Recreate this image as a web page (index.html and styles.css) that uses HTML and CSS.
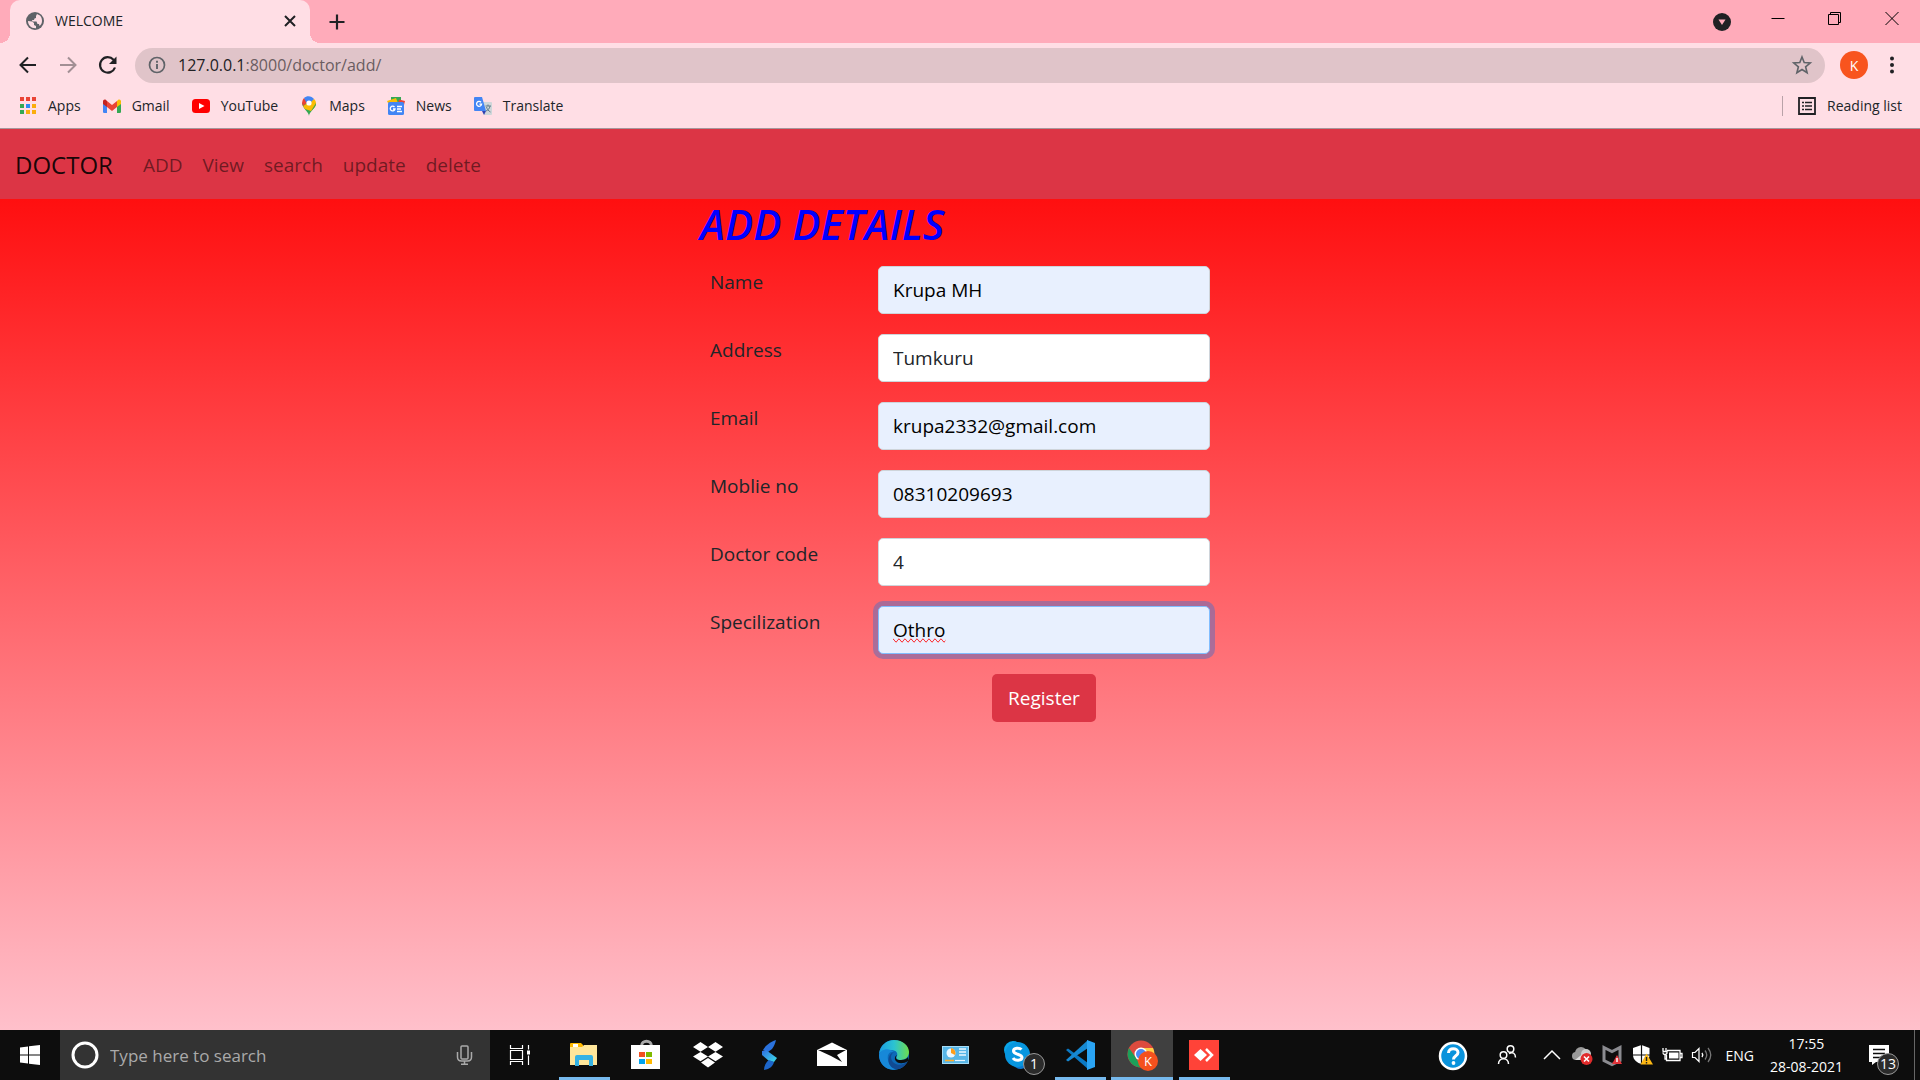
FILE: index.html
```html
<!DOCTYPE html>
<html lang="en">
<head>
<meta charset="utf-8">
<title>WELCOME</title>
<link rel="stylesheet" href="styles.css">
</head>
<body>
<div class="screen">
  <header class="browser">
    <div class="tabstrip">
      <div class="tab">
        <svg class="icon18" viewBox="0 0 18 18"><circle cx="9" cy="9" r="9" fill="#5f6368"/><path d="M2 9l4 .5 2 1.500v2l2 1v2.200C5 16.500 2 13 2 9zM11 2l3 1.500C15.500 5 16 7 16 9c0 2-1 4-2.500 5l-.5-2h-1.500l-1-2.500H6.500L6 8h2l.5-1.500L10 6V4z" fill="#ffdee5"/></svg>
        <span class="tab-title">WELCOME</span>
        <button class="plain" aria-label="Close tab"><svg class="icon20" viewBox="0 0 20 20"><path d="M5 5l10 10M15 5L5 15" stroke="#202124" stroke-width="2"/></svg></button>
      </div>
      <button class="plain new-tab" aria-label="New tab"><svg class="icon20" viewBox="0 0 20 20"><path d="M10 2.500v15M2.500 10h15" stroke="#202124" stroke-width="2.200"/></svg></button>
      <div class="window-buttons">
        <button class="plain" aria-label="Search tabs"><svg class="icon20" viewBox="0 0 20 20"><circle cx="11" cy="14" r="9" fill="#202124"/><path d="M7.500 11.500h7L11 17z" fill="#ffabba"/></svg></button>
        <button class="plain" aria-label="Minimize"><svg class="icon20" viewBox="0 0 20 20"><path d="M3.500 10.500h13" stroke="#000"/></svg></button>
        <button class="plain" aria-label="Restore"><svg class="icon20" viewBox="0 0 20 20"><path d="M3.500 6.500h10v10h-10zM5.500 6.500v-2h10v10h-2" fill="none" stroke="#000"/></svg></button>
        <button class="plain" aria-label="Close"><svg class="icon20" viewBox="0 0 20 20"><path d="M3.500 4l13 13M16.500 4l-13 13" stroke="#000"/></svg></button>
      </div>
    </div>
    <div class="toolbar">
      <button class="plain" aria-label="Back"><svg class="icon20" viewBox="0 0 20 20"><path d="M18 10H3M10 2.500L2.500 10l7.500 7.500" fill="none" stroke="#202124" stroke-width="2"/></svg></button>
      <button class="plain" aria-label="Forward"><svg class="icon20" viewBox="0 0 20 20"><path d="M2 10h15M10 2.500l7.500 7.500-7.500 7.500" fill="none" stroke="#a28f94" stroke-width="2"/></svg></button>
      <button class="plain" aria-label="Reload"><svg class="icon20" viewBox="0 0 20 20"><path d="M17 12.500A7.700 7.700 0 1 1 15.500 4.800L17 6.500" fill="none" stroke="#202124" stroke-width="2.200"/><path d="M18.500 1.500v7.500H11z" fill="#202124"/></svg></button>
      <div class="omnibox">
        <svg class="icon18" viewBox="0 0 18 18"><circle cx="9" cy="9" r="7.500" fill="none" stroke="#5f6368" stroke-width="1.700"/><path d="M9 8v5M9 4.800v2" stroke="#5f6368" stroke-width="1.900"/></svg>
        <span class="url">127.0.0.1<span class="path">:8000/doctor/add/</span></span>
        <button class="plain" aria-label="Bookmark this page"><svg class="icon20" viewBox="0 0 20 20"><path d="M10 2l2.200 5.600 6 .4-4.600 3.800 1.500 5.900L10 14.500l-5.100 3.200 1.500-5.900L1.800 8l6-.4z" fill="none" stroke="#5f6368" stroke-width="1.600"/></svg></button>
      </div>
      <button class="plain avatar" aria-label="Profile">K</button>
      <button class="plain" aria-label="Menu"><svg class="icon20" viewBox="0 0 20 20"><g fill="#202124"><circle cx="10" cy="3.500" r="2"/><circle cx="10" cy="10" r="2"/><circle cx="10" cy="16.500" r="2"/></g></svg></button>
    </div>
    <nav class="bookmarks" aria-label="Bookmarks">
      <a href="#"><svg class="icon20" viewBox="0 0 20 20"><path d="M2 1h4v4H2zM8 1h4v4H8zM14 1h4v4h-4z" fill="#ea4335"/><path d="M2 8h4v4H2zM2 14h4v4H2z" fill="#34a853"/><path d="M8 8h4v4H8z" fill="#2a8cf4"/><path d="M14 8h4v4h-4zM8 14h4v4H8zM14 14h4v4h-4z" fill="#fbad0c"/></svg>Apps</a>
      <a href="#"><svg class="icon20" viewBox="0 0 20 20"><path d="M1 5h4v12H2.200Q1 17 1 16z" fill="#4285f4"/><path d="M15 5h4v11q0 1-1.200 1H15z" fill="#34a853"/><path d="M15 5l1-1c1.500-1 3 0 3 1.500V8l-4 3z" fill="#fbbc04"/><path d="M1 8V5.500C1 4 2.500 3 4 4l1 1v6z" fill="#c5221f"/><path d="M5 5l5 4 5-4v6l-5 4-5-4z" fill="#ea4335"/></svg>Gmail</a>
      <a href="#"><svg class="icon20" viewBox="0 0 20 20"><rect x="1" y="3" width="18" height="14" rx="3.500" fill="#f00"/><path d="M8 7l5.500 3L8 13z" fill="#fff"/></svg>YouTube</a>
      <a href="#"><svg class="icon20" viewBox="0 0 20 20"><path d="M10 20c0-4-7-8-7-13h14c0 5-7 9-7 13z" fill="#34a853"/><path d="M4 10L15 3c3 3 2 6 1 8l-4 4-6-2z" fill="#fbbc04"/><path d="M3 7a7 7 0 0 1 2-5l4 4-5 4z" fill="#ea4335"/><path d="M5 2c3-3 8-2 10 1l-5 5-3-2z" fill="#4285f4"/><path d="M12 15l5-8c0 4-3 6-5 8z" fill="#34a853"/><circle cx="10" cy="7" r="2.600" fill="#fff"/></svg>Maps</a>
      <a href="#"><svg class="icon20" viewBox="0 0 20 20"><path d="M5 1h10v6H5z" fill="#34a853"/><path d="M1 5l9-3 2 5H2z" fill="#fbbc04"/><path d="M13 3.500l6 1.500-1 4-6-1z" fill="#ea4335"/><rect x="2" y="6" width="16" height="13" rx="1.500" fill="#4285f4"/><path d="M8.500 11A2.400 2.400 0 1 0 9 13H7M11 10.500h5M11 13h4M11 15.500h5" fill="none" stroke="#fff" stroke-width="1.300"/></svg>News</a>
      <a href="#"><svg class="icon20" viewBox="0 0 20 20"><path d="M9 6h9q1 0 1 1v11q0 1-1 1h-7z" fill="#cfd6d9"/><path d="M2 1h7l4 14H2q-1 0-1-1V2q0-1 1-1z" fill="#4285f4"/><path d="M9 15h4l-2 4z" fill="#3042b0"/><path d="M8 6.200A2.500 2.500 0 1 0 8.600 8.200H6.400" fill="none" stroke="#fff" stroke-width="1.300"/><path d="M12.500 10H18M15 8.500V10M17 10c-.5 3-2 4-4 5M13.500 11c.5 2 2 4 4 5" fill="none" stroke="#607d8b"/></svg>Translate</a>
      <a class="reading" href="#"><svg class="icon20" viewBox="0 0 20 20"><path d="M2 2h16v16H2z" fill="none" stroke="#202124" stroke-width="1.800"/><path d="M5 6.500h2M5 10h2M5 13.500h2M8 6.500h7M8 10h7M8 13.500h7" stroke="#202124" stroke-width="1.600"/></svg>Reading list</a>
    </nav>
  </header>

  <div class="page">
    <nav class="navbar">
      <a class="brand" href="#">DOCTOR</a>
      <a href="#">ADD</a><a href="#">View</a><a href="#">search</a><a href="#">update</a><a href="#">delete</a>
    </nav>
    <main>
      <h1>ADD DETAILS</h1>
      <form class="details">
        <div class="row"><label for="name">Name</label><input class="autofilled" id="name" type="text" value="Krupa MH"></div>
        <div class="row"><label for="address">Address</label><input id="address" type="text" value="Tumkuru"></div>
        <div class="row"><label for="email">Email</label><input class="autofilled" id="email" type="text" value="krupa2332@gmail.com"></div>
        <div class="row"><label for="mobile">Moblie no</label><input class="autofilled" id="mobile" type="text" value="08310209693"></div>
        <div class="row"><label for="code">Doctor code</label><input id="code" type="text" value="4"></div>
        <div class="row"><label for="special">Specilization</label><input class="autofilled active" id="special" type="text" value="Othro"></div>
        <div class="row"><button class="register" type="button">Register</button></div>
      </form>
    </main>
  </div>

  <footer class="taskbar">
    <button class="plain start" aria-label="Start"><svg class="icon20" viewBox="0 0 20 20"><path d="M0 2.500L8 1.400V9.500H0zM9 1.300L20 0v9.500H9zM0 10.500h8v8.100L0 17.500zM9 10.500h11V20L9 18.700z" fill="#fff"/></svg></button>
    <div class="search">
      <svg class="icon28" viewBox="0 0 28 28"><circle cx="14" cy="14" r="12" fill="none" stroke="#fff" stroke-width="3"/></svg>
      <input type="text" aria-label="Search" placeholder="Type here to search">
      <svg class="icon20" viewBox="0 0 20 20"><g fill="none" stroke="#aaa" stroke-width="1.500"><rect x="7" y="1" width="7" height="13" rx="1"/><path d="M3.500 7v5q0 4 4 4h6q4 0 4-4V7M10.500 16v3M7 19.200h7"/></g></svg>
    </div>
    <button class="plain start" aria-label="Task view"><svg class="icon20" viewBox="0 0 20 20"><path d="M.5 0v3.500h12V0M.5 5.500h12v9H.5zM.5 20v-3.500h12V20M18.500 0v20" fill="none" stroke="#fff" stroke-width="1.200"/><path d="M16.500 5h4v5h-4z" fill="#fff" stroke="#0d0d0d"/></svg></button>
    <div class="apps">
      <button class="plain app open" aria-label="File Explorer"><svg class="icon30" viewBox="0 0 30 30"><path d="M1 4q0-1 1-1h10l2 2v4H1z" fill="#ffb900"/><path d="M4 4h5v3H4z" fill="#fff"/><path d="M1 7h12l2-2h13v20H1z" fill="#ffe69a"/><path d="M6 26V17q0-2 2-2h14q2 0 2 2v9h-4v-6H10v6z" fill="#35b2e4"/></svg></button>
      <button class="plain app" aria-label="Store"><svg class="icon30" viewBox="0 0 30 30"><path d="M10.500 6c0-6.500 10-6.500 10 0" fill="none" stroke="#aaa" stroke-width="3"/><path d="M0 5h29v24H0z" fill="#fff"/><path d="M8 12h6v5H8z" fill="#f25022"/><path d="M15 12h6v5h-6z" fill="#7fba00"/><path d="M8 19h6v5H8z" fill="#00a4ef"/><path d="M15 19h6v5h-6z" fill="#ffb900"/></svg></button>
      <button class="plain app" aria-label="Dropbox"><svg class="icon30" viewBox="0 0 30 30"><path d="M7.500 2L15 7l-7.500 4.700L0 7zM22.500 2L30 7l-7.500 4.700L15 7zM7.500 12L15 16.600 7.500 21.200 0 16.600zM22.500 12l7.500 4.600-7.500 4.600-7.500-4.600zM15 18l7 4.500-7 5-7-5z" fill="#fff"/></svg></button>
      <button class="plain app" aria-label="Stream"><svg class="icon30" viewBox="0 0 30 30"><defs><linearGradient id="bolt" x1="0" y1="0" x2="1" y2="1"><stop offset="0" stop-color="#2f6be0"/><stop offset="1" stop-color="#3de0e8"/></linearGradient></defs><path d="M21 0c-1 4-2 6-4 9l-4 3-5-2c3-5 7-8 13-10z" fill="#2a72dd"/><path d="M7 11l4-1 11 8-3 4-5-1-7-6z" fill="url(#bolt)"/><path d="M9 30c0-4 2-8 5-10l5 2c-1 4-4 7-10 8z" fill="#1d65c9"/></svg></button>
      <button class="plain app" aria-label="Mail"><svg class="icon30" viewBox="0 0 30 30"><path d="M0 10L15 2.500 30 10v16H0z" fill="#fff"/><path d="M1 10h28l-9 5 5 7-11-6z" fill="#0d0d0d"/></svg></button>
      <button class="plain app" aria-label="Edge"><svg class="icon30" viewBox="0 0 30 30"><defs><linearGradient id="sea" x1="0" y1="0" x2="1" y2="0"><stop offset="0" stop-color="#1a9be0"/><stop offset=".5" stop-color="#2bc3d2"/><stop offset="1" stop-color="#6edc4c"/></linearGradient></defs><circle cx="15" cy="15" r="15" fill="#0c69b8"/><path d="M0 14C1 5 8 0 15 0c9 0 15 6 15 12 0 5-4 8-8 8-5 0-5-2-4-4s0-6-6-6C7 10 2 11 0 14z" fill="url(#sea)"/><path d="M0 15c1-6 10-8 15-3-5-1-7 3-6 8 1 5 5 9 9 9C8 32 0 24 0 15z" fill="#1788d8"/><path d="M15 12c-4 2-4 8 0 11 4 3 10 2 14-2-3 6-9 9-13 8-9-3-8-15-1-17z" fill="#114a93"/><path d="M18 15c-2 3-1 5 4 5 3 0 6-1 7-3v4c-4 3-10 3-12 0-2-2-1-5 1-6z" fill="#0d0d0d"/></svg></button>
      <button class="plain app" aria-label="Control Panel"><svg class="icon30" viewBox="0 0 30 30"><path d="M1 6h27v18H1z" fill="#a5dcf5"/><path d="M2 7h25v16H2z" fill="#58b6e7"/><circle cx="10" cy="13" r="4.500" fill="#e9f7ff"/><path d="M10 13V8a5 5 0 0 1 4 7z" fill="#ff9d18"/><path d="M18 9h7M18 12h7M18 15h7" stroke="#e9f7ff" stroke-width="1.600"/><path d="M4 20.500h9" stroke="#ffae2b" stroke-width="1.600"/><path d="M14 20.500h10" stroke="#e9f7ff" stroke-width="1.200"/></svg></button>
      <button class="plain app" aria-label="Skype"><svg class="icon30" viewBox="0 0 30 30"><circle cx="10" cy="10" r="9" fill="#0aa5e8"/><circle cx="18" cy="19" r="10" fill="#0a78d0"/><circle cx="14.500" cy="14.500" r="12.500" fill="#0796df"/><path d="M18.500 9.500c-2-2-8-2-8 1.500 0 4 8.500 2.500 8.500 6.500 0 3.500-7 3.500-9 .5" fill="none" stroke="#fff" stroke-width="3"/></svg><span class="badge">1</span></button>
      <button class="plain app open" aria-label="Visual Studio Code"><svg class="icon30" viewBox="0 0 30 30"><path d="M1 10l2-1.500L23 23v6z" fill="#0b79c4"/><path d="M1 20l2 1.500L23 8V0z" fill="#1689d3"/><path d="M22 0l8 3v24l-8 3z" fill="#2aa4f4"/></svg></button>
      <button class="plain app open current" aria-label="Chrome"><svg class="icon32" viewBox="0 0 32 32"><circle cx="15" cy="15" r="13.500" fill="#dd4b3e"/><path d="M3 9l7 10 5 9.500A13.500 13.500 0 0 1 3 9z" fill="#1ba05a"/><path d="M15 9h12a13.500 13.500 0 0 1-12 19.500l6-10z" fill="#ffce44"/><circle cx="15" cy="15" r="6.500" fill="#fff"/><circle cx="15" cy="15" r="5" fill="#4a8af4"/><circle cx="22" cy="22" r="10" fill="#f4511e"/><text x="22" y="27" text-anchor="middle" class="mini">K</text></svg></button>
      <button class="plain app open" aria-label="AnyDesk"><svg class="icon30" viewBox="0 0 30 30"><path d="M0 0h30v30H0z" fill="#ff4338"/><path d="M5 15l6.500-6 6.500 6-6.500 6z" fill="#fff"/><path d="M17 9l6 6-6 6" fill="none" stroke="#fff" stroke-width="2.500"/></svg></button>
    </div>
    <div class="tray">
      <svg class="icon30 help" viewBox="0 0 30 30"><circle cx="15" cy="16" r="13" fill="#0a93dc" stroke="#fff" stroke-width="2.500"/><path d="M10.500 13c0-6 9.500-5.500 9.500-.5 0 3.500-4.500 3-4.500 7" fill="none" stroke="#fff" stroke-width="3"/><circle cx="15.500" cy="23" r="1.900" fill="#fff"/></svg>
      <svg class="icon20 people" viewBox="0 0 20 20"><g fill="none" stroke="#fff" stroke-width="1.500"><circle cx="13.500" cy="4" r="3.300"/><circle cx="6.500" cy="10" r="3.300"/><path d="M1.500 19c0-7 10-7 10 0M12 8.500c4-2 6.500 0 6.500 4"/></g></svg>
      <svg class="icon20" viewBox="0 0 20 20"><path d="M2 14l8-8 8 8" fill="none" stroke="#fff" stroke-width="1.500"/></svg>
      <svg class="icon20" viewBox="0 0 20 20"><circle cx="4" cy="11" r="4" fill="#999"/><circle cx="9" cy="8" r="6" fill="#999"/><circle cx="14" cy="9" r="5" fill="#ccc"/><path d="M3 15l10-8 6 8z" fill="#ddd"/><circle cx="14.500" cy="14" r="6" fill="#e02b2b"/><path d="M12 11.500l5 5M17 11.500l-5 5" stroke="#fff" stroke-width="1.600"/></svg>
      <svg class="icon20" viewBox="0 0 20 20"><path d="M2 2.500l8 4 8-4v13l-8 4-8-4z" fill="none" stroke="#8b8b90" stroke-width="3"/><path d="M15 10l5 9H10z" fill="#e2343a"/><path d="M15 13v4" stroke="#fff" stroke-width="1.500"/></svg>
      <svg class="icon20" viewBox="0 0 20 20"><path d="M9.500 0l8 3v7c0 5-5 8-8 9-4-1-8.500-4-8.500-9V3z" fill="#fff"/><path d="M9.500 0v19M1 10h17" stroke="#0d0d0d" stroke-width="1.200"/><path d="M14.500 8.500L21 19.500H8.500z" fill="#fdb813"/><path d="M14.500 12v4M14.500 17v1.500" stroke="#222" stroke-width="1.400"/></svg>
      <svg class="icon20" viewBox="0 0 20 20"><path d="M5 5.500h13v10H4.500V10M18 8.500h2v4h-2M1 3v3M4 3v3M.5 6.500h4.500v1q0 2-2 2t-2-2M3 9v5h2" fill="none" stroke="#fff" stroke-width="1.300"/><path d="M7 7.500h9.500v6H7z" fill="#fff"/></svg>
      <svg class="icon20" viewBox="0 0 20 20"><path d="M.5 7.500H3l4-4v13l-4-4H.500z" fill="none" stroke="#fff" stroke-width="1.200"/><path d="M10 8q1.500 2 0 4" fill="none" stroke="#fff" stroke-width="1.400"/><path d="M13 5.500q3.500 4.500 0 9M16 3q5.500 7 0 14" fill="none" stroke="#777" stroke-width="1.300"/></svg>
      <span class="lang">ENG</span>
      <div class="clock"><span>17:55</span><span>28-08-2021</span></div>
      <button class="plain notices" aria-label="Notifications"><svg class="icon20" viewBox="0 0 20 20"><path d="M0 0h20v17H7l-4 3v-3H0z" fill="#fff"/><path d="M4 4.500h12M4 8.500h12M4 12.500h8" stroke="#0d0d0d" stroke-width="1.400"/></svg><span class="badge">13</span></button>
    </div>
  </footer>
</div>
</body>
</html>
```
FILE: styles.css
```css
* { box-sizing: border-box; }

body {
  margin: 0;
  font-family: "Open Sans", "Noto Sans", sans-serif;
  color: #212529;
}

a { color: inherit; text-decoration: none; }
svg { display: block; flex: none; overflow: visible; }

.plain {
  display: flex;
  align-items: center;
  justify-content: center;
  flex: none;
  padding: 0;
  border: 0;
  background: none;
  color: inherit;
  font: inherit;
}

.icon18 { width: 18px; height: 18px; }
.icon20 { width: 20px; height: 20px; }
.icon28 { width: 28px; height: 28px; }
.icon30 { width: 30px; height: 30px; }
.icon32 { width: 32px; height: 32px; }

.screen {
  display: flex;
  flex-direction: column;
  min-height: 100vh;
}

/* Browser window */
.browser {
  background: #ffdee5;
  border-bottom: 1px solid #a8969b;
  font-size: 14px;
}

.tabstrip {
  display: flex;
  align-items: center;
  height: 43px;
  padding-left: 10px;
  background: #ffabba;
}

.tab {
  position: relative;
  display: flex;
  align-items: center;
  gap: 11px;
  width: 300px;
  height: 43px;
  padding: 0 10px 2px 16px;
  border-radius: 10px 10px 0 0;
  background: #ffdee5;
}

.tab::before,
.tab::after {
  content: "";
  position: absolute;
  bottom: 0;
  width: 10px;
  height: 10px;
}

.tab::before { right: 100%; background: radial-gradient(circle at 0 0, #ffabba 10px, #ffdee5 10px); }
.tab::after { left: 100%; background: radial-gradient(circle at 100% 0, #ffabba 10px, #ffdee5 10px); }

.tab-title { flex: 1; }
.new-tab { margin-left: 17px; }

.window-buttons {
  display: flex;
  margin-left: auto;
  padding-bottom: 8px;
}

.window-buttons .plain { width: 57px; }

.toolbar {
  display: flex;
  align-items: center;
  gap: 20px;
  height: 44px;
  padding: 0 18px;
}

.omnibox {
  display: flex;
  align-items: center;
  gap: 12px;
  flex: 1;
  height: 35px;
  margin: 0 -5px 0 -3px;
  padding: 0 13px;
  border-radius: 18px;
  background: #e0c4c9;
}

.url { flex: 1; font-size: 16px; color: #202124; }
.path { color: #6a5d61; }

.avatar {
  width: 28px;
  height: 28px;
  margin-right: -6px;
  border-radius: 50%;
  background: #f8541e;
  color: #fff;
}

.bookmarks {
  display: flex;
  align-items: center;
  gap: 21px;
  height: 41px;
  padding: 0 18px 4px;
}

.bookmarks a {
  display: flex;
  align-items: center;
  gap: 10px;
}

.bookmarks .reading {
  margin-left: auto;
  padding-left: 14px;
  border-left: 1px solid #b9a2a8;
}

/* Site */
.page {
  flex: 1;
  background: linear-gradient(#f00, #ffc0cb);
  font-size: 19px;
  line-height: 30px;
}

.navbar {
  display: flex;
  align-items: center;
  gap: 20px;
  height: 70px;
  padding: 2px 15px 0;
  background: #dc3545;
  color: rgba(0, 0, 0, .5);
}

.brand {
  margin-right: 10px;
  color: rgba(0, 0, 0, .9);
  font-size: 24px;
}

main {
  width: 520px;
  max-width: 100%;
  margin: 0 auto;
}

h1 {
  margin: 0 0 17px;
  color: #00f;
  font-size: 42px;
  font-style: italic;
  font-weight: 600;
  line-height: 50px;
}

.details { display: grid; gap: 20px; }

.row {
  display: grid;
  grid-template-columns: 168px 1fr;
  height: 48px;
  padding: 0 10px;
}

.row label { padding-top: 1px; }

.row input {
  width: 100%;
  height: 48px;
  padding: 0 14px;
  border: 1px solid #ced4da;
  border-radius: 5px;
  background: #fff;
  color: #212529;
  font: inherit;
}

.row .autofilled { background: #e8f0fe; color: #000; }

.row .active {
  border-color: #80bdff;
  box-shadow: 0 0 0 5px rgba(135, 108, 168, .7);
  text-decoration: underline wavy #f00 1px;
  text-decoration-line: spelling-error;
}

.register {
  grid-column: 2;
  justify-self: center;
  padding: 0 16px;
  border: 0;
  border-radius: 5px;
  background: #dc3545;
  color: #fff;
  font: inherit;
}

/* Desktop taskbar */
.taskbar {
  display: flex;
  height: 50px;
  background: #0d0d0d;
  color: #fff;
}

.start { width: 60px; }

.search {
  display: flex;
  align-items: center;
  gap: 11px;
  width: 430px;
  padding: 0 16px 0 11px;
  background: #333;
}

.search input {
  flex: 1;
  padding: 0;
  border: 0;
  background: none;
  font: inherit;
  font-size: 17px;
}

.search input::placeholder { color: #aaa; }

.apps { display: flex; margin-left: 3px; }

.app {
  position: relative;
  width: 62px;
}

.open::after {
  content: "";
  position: absolute;
  right: 5px;
  bottom: 0;
  left: 6px;
  height: 3px;
  background: #76b9ed;
}

.current { background: #404040; }
.current::after { right: 0; left: 0; }

.mini { fill: #fff; font-size: 13px; }

.badge {
  position: absolute;
  right: 4px;
  bottom: 5px;
  width: 22px;
  height: 22px;
  border: 1px solid #999;
  border-radius: 50%;
  background: #2b2b2b;
  font-size: 14px;
  line-height: 20px;
  text-align: center;
}

.tray {
  display: flex;
  align-items: center;
  gap: 10px;
  margin-left: auto;
  padding-right: 5px;
}

.help { margin-right: 19px; }
.people { margin-right: 15px; }
.lang { margin-left: 3px; font-size: 14px; }

.clock {
  display: flex;
  flex-direction: column;
  align-items: center;
  margin-left: 6px;
  font-size: 14px;
  line-height: 23px;
}

.notices {
  position: relative;
  align-self: stretch;
  width: 62px;
  padding-right: 10px;
  border-right: 1px solid #666;
}

.notices .badge { right: 15px; }
```
